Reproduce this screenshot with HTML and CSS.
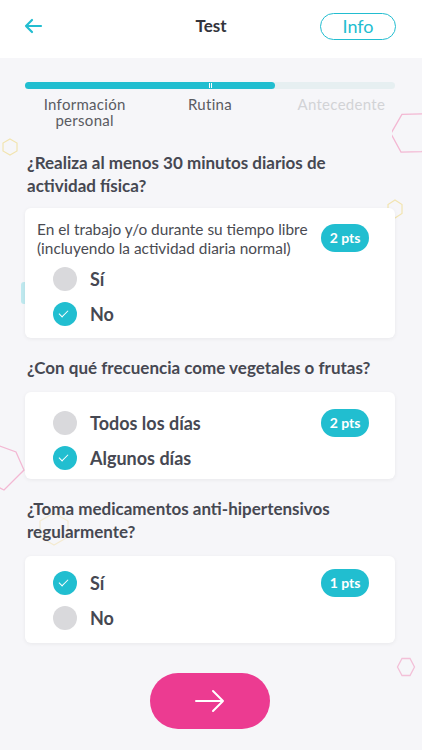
FILE: index.html
```html
<!DOCTYPE html>
<html lang="es">
<head>
    <meta charset="UTF-8">
    <meta name="viewport" content="width=device-width, initial-scale=1.0">
    <title>Test</title>
    <link rel="stylesheet" href="styles.css">
</head>
<body>
    <div class="topbar">
        <button class="back-btn" aria-label="Volver">
            <svg width="19" height="16" viewBox="0 0 19 16" fill="none" stroke="#22bdd0" stroke-width="2.2" stroke-linecap="round" stroke-linejoin="round">
                <path d="M17 8H2M8 2L2 8l6 6"/>
            </svg>
        </button>
        <div class="title">Test</div>
        <button class="info-btn">Info</button>
    </div>

    <div class="page">
        <!-- decorative shapes -->
        <svg class="deco deco-pink-1" width="40" height="46" viewBox="0 0 40 46"><polygon points="20,1 38,12 38,34 20,45 2,34 2,12" transform="rotate(30 20 23)" fill="none" stroke="#f3b8d3" stroke-width="1.3"/></svg>
        <svg class="deco deco-yellow-1" width="18" height="18" viewBox="0 0 18 18"><polygon points="9,1 16,5 16,13 9,17 2,13 2,5" fill="none" stroke="#f2e4b0" stroke-width="1.2"/></svg>
        <svg class="deco deco-yellow-2" width="18" height="20" viewBox="0 0 18 20"><polygon points="9,1 16,5.5 16,14.5 9,19 2,14.5 2,5.5" fill="none" stroke="#f2e4b0" stroke-width="1.2"/></svg>
        <div class="deco deco-cyan"></div>
        <svg class="deco deco-pink-2" width="40" height="50" viewBox="0 0 40 50"><polygon points="8,2 30,10 38,28 18,48 2,40 -4,16" fill="none" stroke="#f3b8d3" stroke-width="1.3"/></svg>
        <svg class="deco deco-yellow-3" width="34" height="34" viewBox="0 0 34 34"><polygon points="17,1 31,9 31,25 17,33 3,25 3,9" fill="none" stroke="#f4ead0" stroke-width="1.2"/></svg>
        <svg class="deco deco-pink-3" width="20" height="20" viewBox="0 0 20 20"><polygon points="6,1.5 14,1.5 18.5,10 14,18.5 6,18.5 1.5,10" fill="none" stroke="#f3c0d8" stroke-width="1.3"/></svg>

        <div class="progress">
            <div class="track">
                <div class="fill" style="width: 67.5%"></div>
                <span class="grip"></span>
            </div>
            <div class="steps">
                <div class="step done">Información personal</div>
                <div class="step current">Rutina</div>
                <div class="step next">Antecedente</div>
            </div>
        </div>

        <div class="question first">¿Realiza al menos 30 minutos diarios de actividad física?</div>
        <div class="card">
            <div class="card-head">
                <p class="hint">En el trabajo y/o durante su tiempo libre (incluyendo la actividad diaria normal)</p>
                <span class="pts">2 pts</span>
            </div>
            <div class="option"><span class="radio"></span>Sí</div>
            <div class="option"><span class="radio checked"></span>No</div>
        </div>

        <div class="question">¿Con qué frecuencia come vegetales o frutas?</div>
        <div class="card options-only">
            <div class="option-row">
                <div class="option"><span class="radio"></span>Todos los días</div>
                <span class="pts">2 pts</span>
            </div>
            <div class="option"><span class="radio checked"></span>Algunos días</div>
        </div>

        <div class="question">¿Toma medicamentos anti-hipertensivos regularmente?</div>
        <div class="card options-only compact">
            <div class="option-row">
                <div class="option"><span class="radio checked"></span>Sí</div>
                <span class="pts">1 pts</span>
            </div>
            <div class="option"><span class="radio"></span>No</div>
        </div>

        <div class="actions">
            <button class="next-btn" aria-label="Siguiente">
                <svg width="32" height="24" viewBox="0 0 32 24" fill="none" stroke="#fff" stroke-width="2" stroke-linecap="round" stroke-linejoin="round">
                    <path d="M2 12h27M19 2l10 10-10 10"/>
                </svg>
            </button>
        </div>
    </div>
</body>
</html>
```

FILE: styles.css
```css
body {
    margin: 0;
    font-family: Lato, "Noto Sans", sans-serif;
    background-color: #f6f6f9;
    color: #43454f;
}
button {
    font-family: inherit;
    cursor: pointer;
}
.topbar {
    height: 58px;
    box-sizing: border-box;
    background: #fff;
    display: flex;
    align-items: center;
    justify-content: space-between;
    padding: 0 26px 6px 24px;
    position: relative;
}
.back-btn {
    background: none;
    border: none;
    padding: 0;
    display: flex;
}
.title {
    position: absolute;
    left: 0;
    right: 0;
    top: 16px;
    text-align: center;
    font-weight: bold;
    font-size: 17px;
    line-height: 20px;
    color: #33343c;
    pointer-events: none;
}
.info-btn {
    width: 76px;
    height: 27px;
    border: 1.5px solid #22bdd0;
    border-radius: 14px;
    background: #fff;
    color: #22bdd0;
    font-size: 18px;
    padding: 0;
    line-height: 24px;
}
.page {
    position: relative;
    padding: 24px 27px 40px 25px;
    overflow: hidden;
}
.deco {
    position: absolute;
    z-index: 0;
}
.deco-pink-1 { left: 392px; top: 52px; }
.deco-yellow-1 { left: 1px; top: 80px; }
.deco-yellow-2 { left: 386px; top: 141px; }
.deco-cyan {
    left: 21px;
    top: 224px;
    width: 10px;
    height: 22px;
    border-radius: 3px;
    background: #bfe9ef;
}
.deco-pink-2 { left: -14px; top: 384px; }
.deco-yellow-3 { left: 37px; top: 454px; }
.deco-pink-3 { left: 396px; top: 599px; }
.progress, .question, .card, .actions {
    position: relative;
    z-index: 1;
}
.track {
    position: relative;
    height: 7px;
    border-radius: 4px;
    background: #e6eff1;
}
.fill {
    height: 100%;
    border-radius: 4px;
    background: #21bed0;
}
.grip {
    position: absolute;
    left: 184px;
    top: 1px;
    width: 3px;
    height: 5px;
    border-left: 1px solid #fff;
    border-right: 1px solid #fff;
    box-sizing: border-box;
}
.steps {
    display: grid;
    grid-template-columns: 1fr 1fr 1fr;
    margin-top: 7px;
    font-size: 15px;
    line-height: 16px;
    letter-spacing: 0.3px;
}
.step {
    text-align: center;
    color: #5a5b62;
}
.step.done {
    padding: 0 10px 0 6px;
}
.step.next {
    color: #d2d3d6;
    padding-left: 16px;
}
.question {
    font-weight: bold;
    font-size: 17px;
    line-height: 23px;
    margin: 18px 0 13px 2px;
    color: #464852;
}
.question.first {
    margin-top: 23px;
    margin-bottom: 11px;
}
.card {
    background: #fff;
    border-radius: 6px;
    box-shadow: 0 1px 4px rgba(0, 0, 0, 0.06);
    padding: 12px 26px 7px 12px;
}
.card.options-only {
    padding-top: 13px;
    padding-bottom: 4px;
}
.card.compact {
    padding-top: 9px;
    padding-bottom: 8px;
}
.card-head {
    display: flex;
    align-items: flex-start;
    justify-content: space-between;
    margin-bottom: 3px;
}
.hint {
    margin: 0;
    font-size: 15.4px;
    line-height: 19px;
    color: #4a4b52;
}
.pts {
    background: #21bed0;
    color: #fff;
    font-weight: bold;
    font-size: 14px;
    border-radius: 14px;
    height: 28px;
    line-height: 28px;
    width: 48px;
    text-align: center;
    flex-shrink: 0;
}
.card-head .pts {
    margin-top: 4px;
}
.option-row {
    display: flex;
    align-items: center;
    justify-content: space-between;
}
.option {
    display: flex;
    align-items: center;
    height: 35px;
    padding-left: 16px;
    font-size: 18px;
    font-weight: bold;
    color: #464852;
}
.radio {
    width: 24px;
    height: 24px;
    border-radius: 50%;
    background: #d9d9dc;
    margin-right: 13px;
    flex-shrink: 0;
    position: relative;
}
.radio.checked {
    background: #21bed0;
}
.radio.checked::after {
    content: "";
    position: absolute;
    left: 8px;
    top: 6px;
    width: 4px;
    height: 8px;
    border-right: 1.5px solid #fff;
    border-bottom: 1.5px solid #fff;
    transform: rotate(45deg);
}
.actions {
    display: flex;
    justify-content: center;
    margin-top: 30px;
}
.next-btn {
    width: 120px;
    height: 56px;
    border: none;
    border-radius: 28px;
    background: #ec3b91;
    display: flex;
    align-items: center;
    justify-content: center;
}
```
